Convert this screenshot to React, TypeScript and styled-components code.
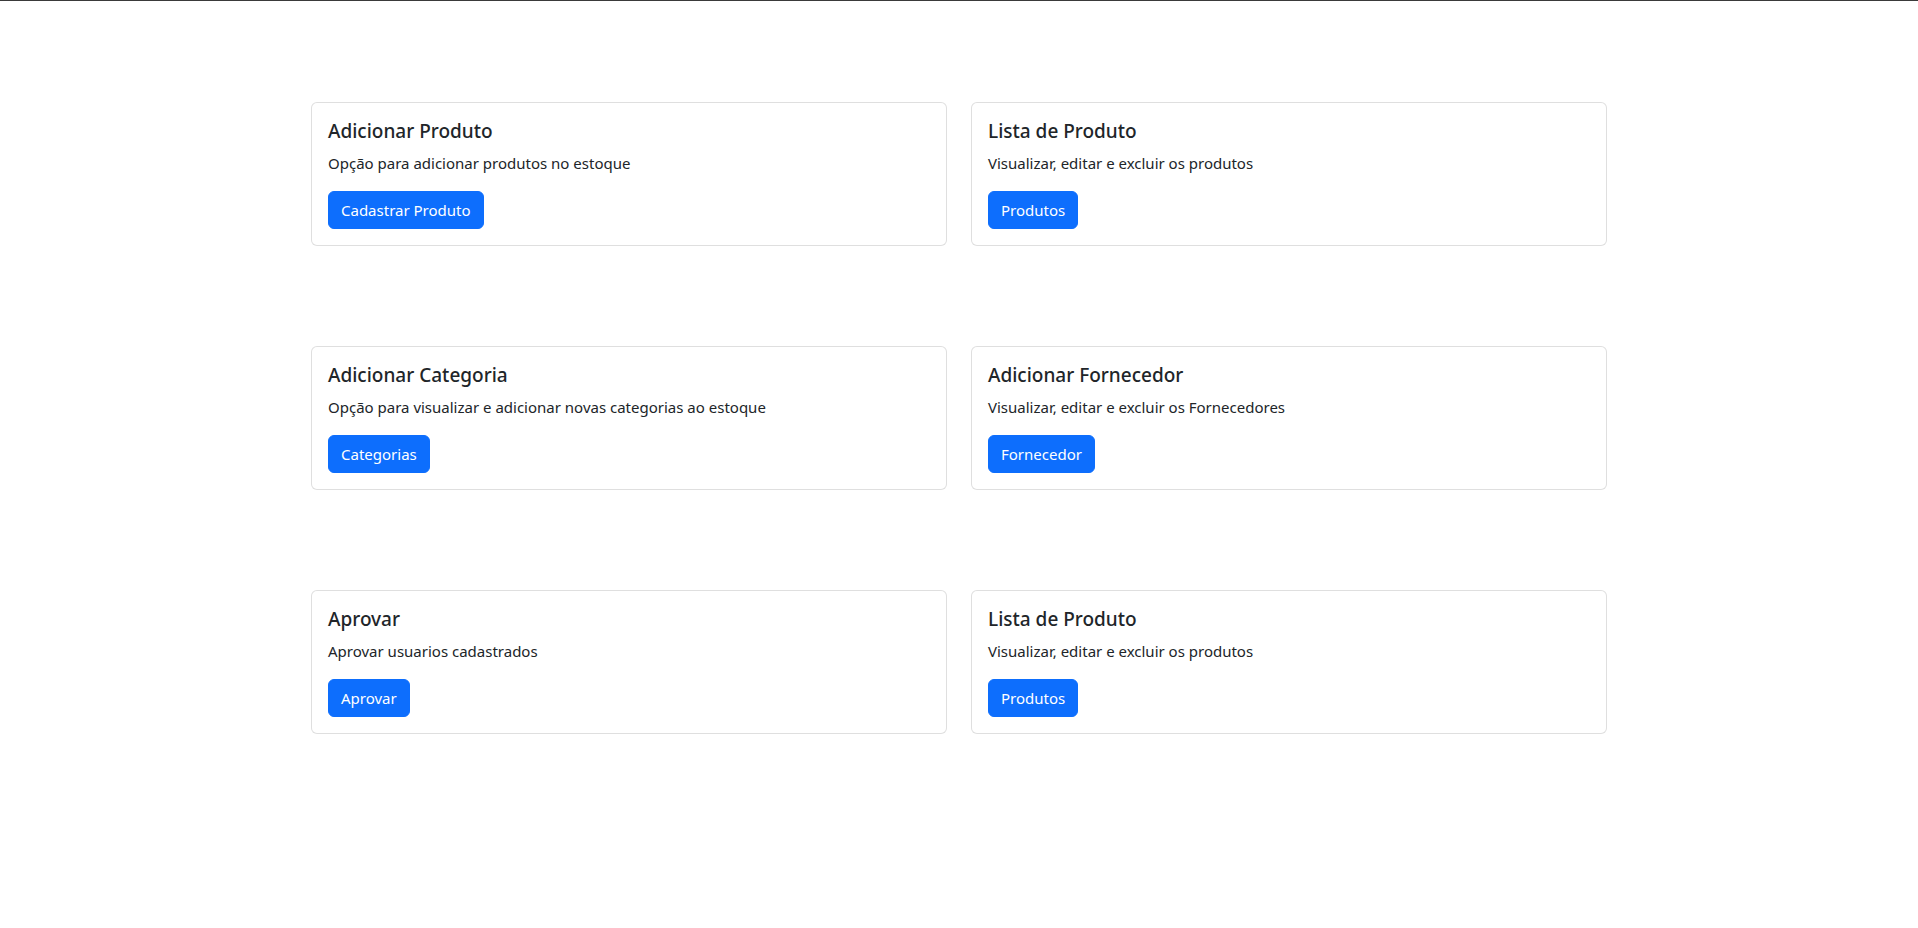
import React from "react";
import styled, { createGlobalStyle } from "styled-components";

const GlobalStyle = createGlobalStyle`
  * { box-sizing: border-box; }
  html, body { margin: 0; padding: 0; background: #fff; }
  body {
    font-family: "Noto Sans", "Open Sans", "Liberation Sans", sans-serif;
    font-size: 16px;
    line-height: 1.5;
    color: #212529;
  }
`;

const TopBar = styled.div`
  height: 1px;
  background: #3a3a3a;
`;

const Container = styled.main`
  width: 1320px;
  margin: 0 auto;
  padding: 0 12px;
`;

const Row = styled.section`
  display: grid;
  grid-template-columns: 1fr 1fr;
  column-gap: 24px;
  margin-top: 100px;
  &:first-child { margin-top: 101px; }
`;

const Card = styled.div`
  border: 1px solid rgba(0, 0, 0, 0.125);
  border-radius: 6px;
  background: #fff;
  padding: 16px;
`;

const Title = styled.h5`
  margin: 0 0 8px;
  font-size: 19px;
  font-weight: 500;
  line-height: 24px;
  color: #212529;
`;

const Text = styled.p`
  margin: 0 0 16px;
  font-size: 15px;
  line-height: 24px;
  color: #212529;
`;

const Button = styled.button`
  display: inline-block;
  font-family: inherit;
  font-size: 15px;
  line-height: 24px;
  padding: 6px 12px;
  color: #fff;
  background: #0d6efd;
  border: 1px solid #0d6efd;
  border-radius: 6px;
  cursor: pointer;
`;

type Item = { title: string; text: string; action: string };

const rows: Item[][] = [
  [
    { title: "Adicionar Produto", text: "Opção para adicionar produtos no estoque", action: "Cadastrar Produto" },
    { title: "Lista de Produto", text: "Visualizar, editar e excluir os produtos", action: "Produtos" },
  ],
  [
    { title: "Adicionar Categoria", text: "Opção para visualizar e adicionar novas categorias ao estoque", action: "Categorias" },
    { title: "Adicionar Fornecedor", text: "Visualizar, editar e excluir os Fornecedores", action: "Fornecedor" },
  ],
  [
    { title: "Aprovar", text: "Aprovar usuarios cadastrados", action: "Aprovar" },
    { title: "Lista de Produto", text: "Visualizar, editar e excluir os produtos", action: "Produtos" },
  ],
];

export default function App() {
  return (
    <>
      <GlobalStyle />
      <TopBar />
      <Container>
        {rows.map((row, i) => (
          <Row key={i}>
            {row.map((it, j) => (
              <Card key={j}>
                <Title>{it.title}</Title>
                <Text>{it.text}</Text>
                <Button type="button">{it.action}</Button>
              </Card>
            ))}
          </Row>
        ))}
      </Container>
    </>
  );
}
